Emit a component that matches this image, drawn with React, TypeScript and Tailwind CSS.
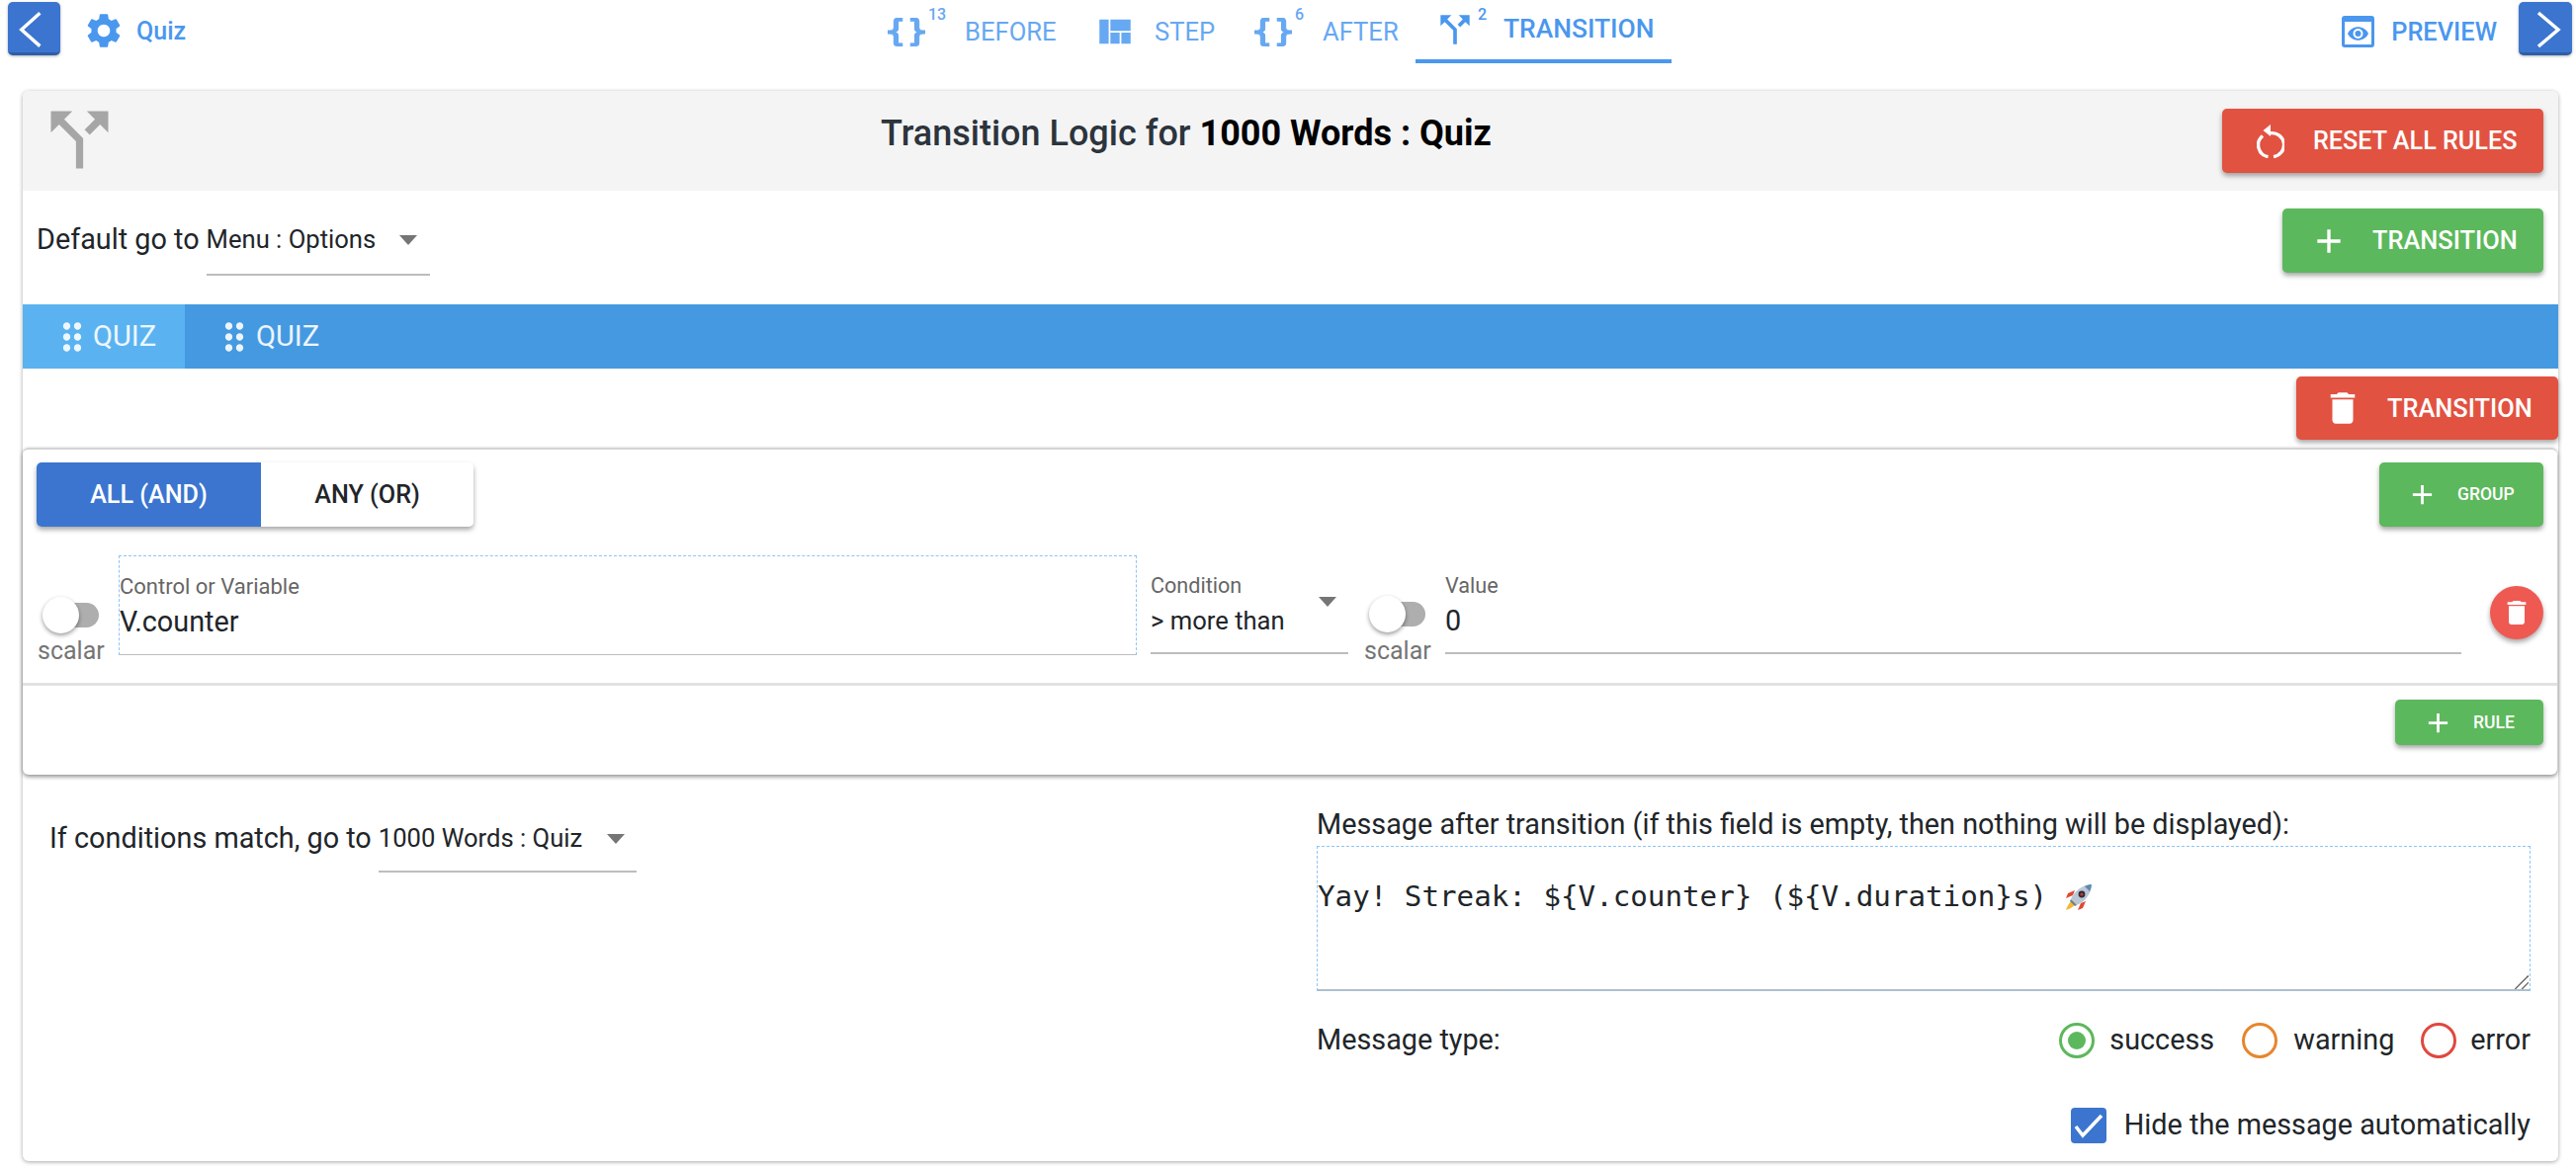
import React from "react";
import { MdAdd, MdCallSplit, MdDelete, MdDragIndicator, MdSettings, MdViewQuilt } from "react-icons/md";

const braces = "M8,3A2,2 0 0,0 6,5V9A2,2 0 0,1 4,11H3V13H4A2,2 0 0,1 6,15V19A2,2 0 0,0 8,21H10V19H8V14A2,2 0 0,0 6,12A2,2 0 0,0 8,10V5H10V3M16,3A2,2 0 0,1 18,5V9A2,2 0 0,0 20,11H21V13H20A2,2 0 0,0 18,15V19A2,2 0 0,1 16,21H14V19H16V14A2,2 0 0,1 18,12A2,2 0 0,1 16,10V5H14V3H16Z";

function Braces() {
  return (
    <svg viewBox="3 3 18 18" preserveAspectRatio="none" className="w-[38px] h-[29px]" fill="currentColor" stroke="currentColor" strokeWidth="0.5">
      <path d={braces} />
    </svg>
  );
}

function Chevron({ right }: { right?: boolean }) {
  return (
    <svg viewBox="0 0 54 54" className="w-[54px] h-[54px]" fill="none" stroke="white" strokeWidth="3.5">
      <polyline points={right ? "20,12 40,29 20,46" : "33,12 14,29 33,46"} />
    </svg>
  );
}

function Caret() {
  return <div className="w-0 h-0 border-l-[9px] border-r-[9px] border-t-[10px] border-l-transparent border-r-transparent border-t-[#757575]" />;
}

function Toggle() {
  return (
    <div className="relative w-[57px] h-[37px]">
      <div className="absolute left-[12px] top-[6px] w-[45px] h-[25px] rounded-full bg-[#aeaeae]" />
      <div className="absolute left-0 top-0 w-[37px] h-[37px] rounded-full bg-white shadow-[0_2px_4px_rgba(0,0,0,0.4)]" />
    </div>
  );
}

function ResetIcon() {
  return (
    <svg viewBox="0 0 28 34" className="w-[28px] h-[34px]" fill="none" stroke="white" strokeWidth="3.4">
      <path d="M11.5 32.6 A12 12 0 0 1 6 11.5" />
      <path d="M17 32.6 A12 12 0 0 0 14 8.7" />
      <path d="M6.5 6 L14 0 L14 12 Z" fill="white" stroke="none" />
    </svg>
  );
}

function PreviewIcon() {
  return (
    <svg viewBox="0 0 33 32" className="w-[33px] h-[32px]">
      <rect x="0" y="0" width="33" height="32" rx="3" fill="#4a97ee" />
      <rect x="3" y="6" width="27" height="23" fill="white" />
      <path d="M6 18 C10 9 23 9 27 18 C23 27 10 27 6 18 Z" fill="#4a97ee" />
      <circle cx="16.5" cy="18" r="5" fill="white" />
      <circle cx="16.5" cy="18" r="3" fill="#4a97ee" />
    </svg>
  );
}

function Rocket() {
  return (
    <svg viewBox="0 0 28 28" className="w-[28px] h-[28px] inline-block align-[-5px] ml-[18px]">
      <path d="M8 12 L1 15 L3 10 L10 7 Z" fill="#e2492f" />
      <path d="M16 20 L13 27 L18 25 L21 18 Z" fill="#e2492f" />
      <path d="M8 17 C4 19 2 24 1 27 C4 26 9 24 11 20 Z" fill="#f7b733" />
      <path d="M6 16 C9 8 18 1 27 1 C27 10 20 19 12 22 Z" fill="#b9c8d6" />
      <path d="M27 1 C26.5 4 26 6 25 8 L20 3 C22 2 24 1 27 1 Z" fill="#5f88ad" />
      <path d="M6 16 L12 22 L10 23 L5 18 Z" fill="#6f7f8e" />
      <circle cx="17" cy="11" r="3.4" fill="#2f2a33" />
      <circle cx="17" cy="11" r="1.6" fill="#b5413a" />
    </svg>
  );
}

function GreenBtn({ label, w, h }: { label: string; w: string; h: string }) {
  return (
    <div className={`flex items-center ${w} ${h} pl-[27px] gap-[19px] rounded-[5px] bg-[#5cb85c] text-white text-[17.5px] font-medium shadow-[0_3px_5px_rgba(0,0,0,0.35)]`}>
      <MdAdd size={33} />
      <span>{label}</span>
    </div>
  );
}

export default function App() {
  return (
    <div className="w-[2606px] h-[1182px] bg-white overflow-hidden font-['Roboto',sans-serif] text-[#212529]">
      {/* top bar */}
      <div className="h-[92px] flex items-start pt-[2px] pl-[8px] pr-[4px]">
        <div className="w-[53px] h-[54px] rounded-[5px] bg-[#3b75cf] border-b-[3px] border-[#2f5ea8] shadow-[0_1px_3px_rgba(0,0,0,0.3)] flex items-center justify-center">
          <Chevron />
        </div>
        <div className="w-[837px] flex items-center h-[58px] pl-[26px] gap-[15px] text-[#4a97ee] text-[25px] font-medium">
          <MdSettings size={42} className="-ml-[3px] -mr-[3px]" />
          <span className="mt-[2px]">Quiz</span>
        </div>
        <div className="flex h-[60px] text-[#66a8f2] text-[25.6px]">
          <div className="flex items-center h-[58px] pt-[2px]">
            <Braces />
            <span className="text-[16px] font-medium ml-[3px] w-[37px] leading-none self-start pt-[3px]">13</span>
            <span className="w-[135px]">BEFORE</span>
            <MdViewQuilt size={42} className="-ml-[4px] -mr-[2px]" />
            <span className="ml-[21px] w-[101px]">STEP</span>
            <Braces />
            <span className="text-[16px] font-medium ml-[3px] w-[28px] leading-none self-start pt-[3px]">6</span>
            <span className="w-[94px]">AFTER</span>
          </div>
          <div className="flex items-center w-[259px] h-[62px] border-b-[4px] border-[#4a97ee] pl-[18px] text-[#4a97ee] font-medium">
            <MdCallSplit size={44} className="-mt-[3px]" />
            <span className="text-[16px] ml-[1px] w-[26px] leading-none self-start pt-[5px] font-medium">2</span>
            <span className="-mt-[3px] text-[26.4px]">TRANSITION</span>
          </div>
        </div>
        <div className="flex-1 flex justify-end items-center h-[60px] pr-[22px] gap-[17px] text-[#4a97ee] text-[25.4px] font-medium">
          <PreviewIcon />
          <span>PREVIEW</span>
        </div>
        <div className="w-[54px] h-[54px] rounded-[5px] bg-[#3b75cf] border-b-[3px] border-[#2f5ea8] shadow-[0_1px_3px_rgba(0,0,0,0.3)] flex items-center justify-center">
          <Chevron right />
        </div>
      </div>

      {/* main card */}
      <div className="ml-[23px] w-[2565px] h-[1083px] rounded-[6px] bg-white shadow-[0_1px_4px_rgba(0,0,0,0.35)]">
        <div className="h-[101px] bg-[#f4f4f4] rounded-t-[6px] flex items-start">
          <div className="w-[868px] pl-[14px] pt-[6px] text-[#a6a6a6]">
            <MdCallSplit size={87} />
          </div>
          <div className="pt-[20px] text-[36px] leading-[46px] font-medium text-[#2c343d]">
            Transition Logic for <span className="text-black font-bold">1000 Words : Quiz</span>
          </div>
          <div className="ml-auto mt-[18px] mr-[15px] w-[325px] h-[65px] pl-[35px] gap-[29px] flex items-center rounded-[5px] bg-[#e25241] text-white text-[25.2px] font-medium shadow-[0_3px_5px_rgba(0,0,0,0.35)]">
            <ResetIcon />
            <span>RESET ALL RULES</span>
          </div>
        </div>

        <div className="h-[115px] flex items-start justify-between pr-[15px]">
          <div className="flex items-start pl-[14px] pt-[31px] text-[28.8px] leading-[36px]">
            <span className="mr-[7px]">Default go to</span>
            <div className="w-[226px] h-[55px] border-b-2 border-[#bdbdbd] flex items-start justify-between pr-[13px] text-[25.6px] leading-[36px]">
              <span>Menu : Options</span>
              <div className="mt-[14px]"><Caret /></div>
            </div>
          </div>
          <div className="mt-[18px] w-[264px] h-[65px] pl-[27px] gap-[24px] flex items-center rounded-[5px] bg-[#5cb85c] text-white text-[25.4px] font-medium shadow-[0_3px_5px_rgba(0,0,0,0.35)]">
            <MdAdd size={40} />
            <span>TRANSITION</span>
          </div>
        </div>

        <div className="h-[65px] bg-[#4599e0] flex text-[29px] text-white/90">
          <div className="w-[164px] bg-[#5ab3f0] flex items-center pl-[28px] gap-[4px]">
            <MdDragIndicator size={44} />
            <span className="-ml-[5px]">QUIZ</span>
          </div>
          <div className="flex items-center pl-[28px] gap-[4px]">
            <MdDragIndicator size={44} />
            <span className="-ml-[4px]">QUIZ</span>
          </div>
        </div>

        <div className="h-[80px] flex items-start justify-end pt-[8px]">
          <div className="w-[265px] h-[64px] pl-[30px] gap-[24px] flex items-center rounded-[5px] bg-[#e25241] text-white text-[25.4px] font-medium shadow-[0_3px_5px_rgba(0,0,0,0.35)]">
            <MdDelete size={42} className="-ml-[4px]" />
            <span>TRANSITION</span>
          </div>
        </div>

        {/* group */}
        <div className="w-[2564px] h-[331px] rounded-[6px] bg-white border-t-2 border-[#d4d4d4] shadow-[0_2px_4px_rgba(0,0,0,0.45)]">
          <div className="flex items-start justify-between pt-[13px] px-[14px]">
            <div className="flex h-[65px] rounded-[5px] shadow-[0_3px_5px_rgba(0,0,0,0.35)] text-[25.2px] font-medium">
              <div className="w-[227px] rounded-l-[5px] bg-[#3b75cf] text-white flex items-center justify-center">ALL (AND)</div>
              <div className="w-[215px] rounded-r-[5px] bg-white flex items-center justify-center">ANY (OR)</div>
            </div>
            <GreenBtn label="GROUP" w="w-[166px]" h="h-[65px]" />
          </div>

          <div className="h-[161px] flex items-start border-b-[3px] border-[#e2e2e2]">
            <div className="w-[97px] pl-[15px] pt-[71px] flex flex-col">
              <div className="pl-[5px]"><Toggle /></div>
              <span className="text-[25px] leading-[28px] text-[#757575] mt-[4px]">scalar</span>
            </div>
            <div className="mt-[29px] w-[1030px] h-[101px] border-t border-l border-r border-dashed border-[#8ec4f5] border-b-0 flex flex-col">
              <span className="mt-[18px] text-[22px] leading-[26px] text-[#666]">Control or Variable</span>
              <span className="mt-[5px] text-[28.8px] leading-[34px]">V.counter</span>
              <div className="mt-auto h-[1px] bg-[#bdbdbd]" />
            </div>
            <div className="ml-[14px] mt-[29px] w-[200px] h-[100px] border-b-2 border-[#bdbdbd] flex flex-col">
              <span className="mt-[18px] text-[21.6px] leading-[26px] text-[#666]">Condition</span>
              <div className="flex justify-between pr-[12px]">
                <span className="mt-[5px] text-[25.6px] leading-[34px]">&gt; more than</span>
                <div className="-mt-[2px]"><Caret /></div>
              </div>
            </div>
            <div className="w-[98px] pl-[16px] pt-[70px] flex flex-col bg-transparent">
              <div className="pl-[5px]"><Toggle /></div>
              <span className="text-[25px] leading-[28px] text-[#757575] mt-[5px]">scalar</span>
            </div>
            <div className="mt-[29px] w-[1028px] h-[100px] border-b-2 border-[#bdbdbd] flex flex-col">
              <span className="mt-[18px] text-[21.6px] leading-[26px] text-[#666]">Value</span>
              <span className="mt-[5px] text-[28.8px] leading-[34px]">0</span>
            </div>
            <div className="ml-[29px] mt-[60px] w-[54px] h-[54px] rounded-full bg-[#ee5a52] text-white flex items-center justify-center shadow-[0_3px_5px_rgba(0,0,0,0.35)]">
              <MdDelete size={32} />
            </div>
          </div>

          <div className="flex justify-end pr-[14px] pt-[14px]">
            <GreenBtn label="RULE" w="w-[150px]" h="h-[46px]" />
          </div>
        </div>

        {/* bottom */}
        <div className="flex items-start">
          <div className="w-[1309px] pl-[27px] pt-[46px] flex items-start text-[28.8px] leading-[36px]">
            <span className="mr-[7px]">If conditions match, go to</span>
            <div className="w-[261px] h-[53px] border-b-2 border-[#bdbdbd] flex items-start justify-between pr-[12px] text-[25.6px]">
              <span>1000 Words : Quiz</span>
              <div className="mt-[14px]"><Caret /></div>
            </div>
          </div>
          <div className="w-[1228px] flex flex-col pt-[32px]">
            <span className="text-[28.8px] leading-[36px]">Message after transition (if this field is empty, then nothing will be displayed):</span>
            <div className="mt-[4px] h-[147px] border border-dashed border-[#8ec4f5] relative pt-[31px] font-['DejaVu_Sans_Mono',monospace] text-[29.2px] leading-[38px] whitespace-pre">
              {"Yay! Streak: ${V.counter} (${V.duration}s)"}<Rocket />
              <svg viewBox="0 0 14 14" className="absolute right-[1px] bottom-[1px] w-[16px] h-[16px]" stroke="#666" strokeWidth="1.2">
                <line x1="2" y1="14" x2="14" y2="2" />
                <line x1="8" y1="14" x2="14" y2="8" />
              </svg>
            </div>
            <div className="h-[2px] -mt-[2px] bg-[#bdbdbd]" />
            <div className="mt-[32px] flex items-center justify-between h-[36px] text-[28.8px]">
              <span>Message type:</span>
              <div className="flex items-center">
                <div className="w-[36px] h-[36px] rounded-full border-[3px] border-[#5cb85c] flex items-center justify-center">
                  <div className="w-[18px] h-[18px] rounded-full bg-[#5cb85c]" />
                </div>
                <span className="ml-[15px] w-[134px]">success</span>
                <div className="w-[36px] h-[36px] rounded-full border-[3px] border-[#e6862e]" />
                <span className="ml-[16px] w-[129px]">warning</span>
                <div className="w-[36px] h-[36px] rounded-full border-[3px] border-[#e0483e]" />
                <span className="ml-[14px]">error</span>
              </div>
            </div>
            <div className="mt-[50px] flex items-center justify-end h-[36px] text-[28.8px]">
              <div className="w-[36px] h-[36px] rounded-[4px] bg-[#3b75cf] flex items-center justify-center">
                <svg viewBox="0 0 36 36" className="w-[36px] h-[36px]" fill="none" stroke="white" strokeWidth="3.5">
                  <polyline points="5,19 12,28 31,8" />
                </svg>
              </div>
              <span className="ml-[18px]">Hide the message automatically</span>
            </div>
          </div>
        </div>
      </div>
    </div>
  );
}
